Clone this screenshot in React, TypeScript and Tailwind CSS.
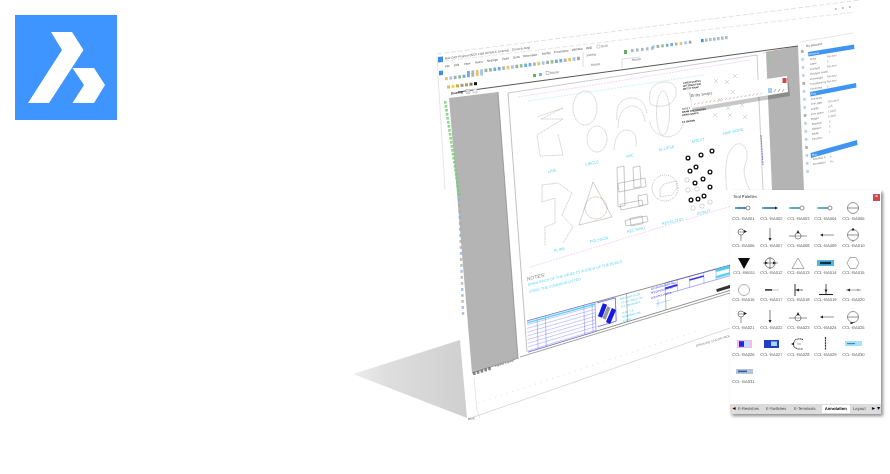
import type { ReactNode } from "react";

const ink = "#4a4a4a";
const soft = "#8a8a8a";

// Small symbol previews of the tool palette, each in a 24x14 box
const Arrow = ({ x, y, dir = "r" }: { x: number; y: number; dir?: "r" | "l" | "d" | "u" }) => {
  const pts = {
    r: `${x},${y - 1.5} ${x + 3},${y} ${x},${y + 1.5}`,
    l: `${x},${y - 1.5} ${x - 3},${y} ${x},${y + 1.5}`,
    d: `${x - 1.5},${y} ${x},${y + 3} ${x + 1.5},${y}`,
    u: `${x - 1.5},${y} ${x},${y - 3} ${x + 1.5},${y}`,
  }[dir];
  return <polygon points={pts} fill="#222" />;
};

const stemCircle = (
  <>
    <circle cx="9" cy="4" r="3" fill="none" stroke={ink} strokeWidth=".6" />
    <line x1="6" y1="4" x2="12" y2="4" stroke={ink} strokeWidth=".5" />
    <line x1="9" y1="7" x2="9" y2="13" stroke={ink} strokeWidth=".6" />
    <Arrow x={12} y={3.5} />
  </>
);
const stem = (
  <>
    <line x1="11" y1="0" x2="11" y2="12" stroke={ink} strokeWidth=".7" />
    <Arrow x={11} y={10} dir="d" />
  </>
);
const inline = (
  <>
    <line x1="3" y1="8" x2="21" y2="8" stroke={ink} strokeWidth=".6" />
    <circle cx="12" cy="8" r="3" fill="white" stroke={ink} strokeWidth=".6" />
    <line x1="9" y1="8" x2="15" y2="8" stroke={ink} strokeWidth=".5" />
    <Arrow x={12} y={5} dir="u" />
  </>
);
const wire = (
  <>
    <line x1="8" y1="7" x2="20" y2="7" stroke={ink} strokeWidth=".6" />
    <Arrow x={9} y={7} dir="l" />
  </>
);
const ringBar = (
  <>
    <circle cx="12" cy="7" r="5.5" fill="none" stroke={ink} strokeWidth=".6" />
    <line x1="6.5" y1="7" x2="17.5" y2="7" stroke={ink} strokeWidth=".6" />
  </>
);
const tagLine = (c1: string, c2: string) => (
  <>
    <line x1="3" y1="7" x2="14" y2="7" stroke={c1} strokeWidth="1.6" />
    <line x1="5" y1="7" x2="14" y2="7" stroke={c2} strokeWidth=".5" />
    <circle cx="16" cy="7" r="2" fill="white" stroke={ink} strokeWidth=".6" />
  </>
);

const symbols: ReactNode[] = [
  tagLine("#3f8fd8", "#1c3f66"),
  <>
    <line x1="3" y1="7" x2="16" y2="7" stroke="#3f8fd8" strokeWidth="1.6" />
    <line x1="5" y1="7" x2="16" y2="7" stroke="#1c3f66" strokeWidth=".5" />
    <Arrow x={16} y={7} />
  </>,
  tagLine("#58b8e8", "#27506f"),
  tagLine("#58b8e8", "#27506f"),
  ringBar,
  stemCircle,
  stem,
  inline,
  wire,
  <>
    {ringBar}
    <Arrow x={12} y={2.5} dir="u" />
    <line x1="12" y1="12.5" x2="12" y2="14" stroke={ink} strokeWidth=".6" />
  </>,
  <polygon points="6,2 18,2 12,13" fill="#0c0c0c" />,
  <>
    <circle cx="11" cy="7" r="5" fill="none" stroke={ink} strokeWidth=".7" />
    <line x1="4" y1="7" x2="19" y2="7" stroke={ink} strokeWidth=".6" />
    <line x1="11" y1="1" x2="11" y2="13" stroke={ink} strokeWidth=".6" />
    <Arrow x={6} y={7} />
    <Arrow x={14} y={7} />
  </>,
  <polygon points="12,2 18,12.5 6,12.5" fill="none" stroke={soft} strokeWidth=".7" />,
  <>
    <rect x="3" y="4" width="17" height="6" fill="#4fb6e6" />
    <rect x="6" y="5.8" width="11" height="2.4" fill="#0b2a3e" />
  </>,
  <polygon points="9,1.5 15,1.5 18,7 15,12.5 9,12.5 6,7" fill="none" stroke={soft} strokeWidth=".7" />,
  <circle cx="12" cy="7" r="5.5" fill="none" stroke={soft} strokeWidth=".7" />,
  <>
    <line x1="6" y1="7" x2="20" y2="7" stroke={soft} strokeWidth=".5" />
    <rect x="6" y="6.2" width="7" height="1.4" fill="#222" />
  </>,
  <>
    <line x1="9" y1="1" x2="9" y2="13" stroke="#333" strokeWidth="1" />
    <line x1="9" y1="7" x2="17" y2="7" stroke="#333" strokeWidth=".7" />
    <Arrow x={13} y={7} dir="l" />
  </>,
  <>
    <line x1="12" y1="1" x2="12" y2="11" stroke="#333" strokeWidth=".8" />
    <line x1="5" y1="11.5" x2="19" y2="11.5" stroke="#222" strokeWidth="1.1" />
    <Arrow x={12} y={6.5} dir="d" />
  </>,
  <>
    <line x1="5" y1="7" x2="20" y2="7" stroke={ink} strokeWidth=".5" />
    <Arrow x={9} y={7} dir="l" />
    <line x1="17" y1="6" x2="17" y2="8" stroke={ink} strokeWidth=".6" />
  </>,
  stemCircle,
  stem,
  inline,
  wire,
  <>
    {ringBar}
    <Arrow x={10.5} y={12.5} dir="d" />
    <line x1="13.5" y1="12.5" x2="10.5" y2="12.5" stroke="#222" strokeWidth=".5" />
  </>,
  <>
    <rect x="5" y="3" width="15" height="8" fill="#f3b8f3" />
    <rect x="7" y="4.2" width="11" height="5.6" fill="#b9e2fb" />
    <rect x="7" y="4.2" width="5" height="5.6" fill="#2323d8" />
  </>,
  <>
    <rect x="5" y="3" width="15" height="8" fill="#1f3fc4" />
    <rect x="12" y="4.5" width="6" height="4.5" fill="#a8d4f6" />
  </>,
  <>
    <path d="M17,2.5 Q10,0.5 8,5 Q6,10 12,12 L17,12" fill="none" stroke="#444" strokeWidth="1.1" strokeDasharray="1.2 .5" />
    <Arrow x={8} y={7} dir="l" />
    <line x1="11" y1="7" x2="15" y2="7" stroke={ink} strokeWidth=".5" />
  </>,
  <line x1="11.5" y1="0" x2="11.5" y2="13" stroke="#333" strokeWidth="1.2" strokeDasharray="2 .6" />,
  <>
    <rect x="4" y="4" width="17" height="5" fill="#a6e2f8" />
    <rect x="6" y="6" width="8" height="1.2" fill="#3d86c9" />
  </>,
  <>
    <rect x="4" y="4" width="17" height="5" fill="#b9c3d4" />
    <rect x="6" y="5.6" width="9" height="1.6" fill="#2d5bb0" />
  </>,
];

const tabs = ["E-Resistors", "E-Switches", "E-Terminals"];

function ToolPalette() {
  return (
    <div className="absolute left-[730px] top-[190px] flex h-[224px] w-[151px] flex-col bg-white text-[#555] shadow-[2px_2px_3px_rgba(0,0,0,0.45)] blur-[0.25px]">
      <div className="flex h-[11px] shrink-0 items-center justify-between pl-[3px] pr-[1px] pt-[3px]">
        {/* browser floors text at 6px, so tiny labels are scaled down */}
        <span className="origin-left scale-[0.7] whitespace-nowrap text-[6px] text-[#333]">Tool Palettes</span>
        <span className="flex h-[7px] w-[7px] items-center justify-center bg-[#d0484c] text-[6px] leading-none text-white">×</span>
      </div>
      <div className="grid flex-1 grid-cols-[repeat(5,27.3px)] content-start">
        {symbols.map((symbol, i) => (
          <div key={i} className="flex h-[27.3px] flex-col items-center">
            <svg viewBox="0 0 24 14" className="h-[14px] w-[24px] shrink-0">
              {symbol}
            </svg>
            <span className="mt-[0.5px] scale-[0.68] whitespace-nowrap text-[6px] leading-[6px]">CCL-GA{String(i + 1).padStart(3, "0")}</span>
          </div>
        ))}
      </div>
      <div className="flex h-[10px] shrink-0 items-center bg-[#dcdcdc] text-[6px] leading-none text-[#444]">
        <span className="w-[8px] text-center text-[6px] text-black">◂</span>
        {tabs.map((tab) => (
          <span key={tab} className="w-[28px] origin-left scale-[0.68] whitespace-nowrap">{tab}</span>
        ))}
        <span className="flex h-[8px] w-[28px] items-center justify-center bg-white font-bold text-black">
          <span className="scale-[0.7] whitespace-nowrap">Annotation</span>
        </span>
        <span className="w-[22px] origin-left translate-x-[3px] scale-[0.7]">Layout</span>
        <span className="w-[5px] text-[6px] text-black">▸</span>
        <span className="w-[4px] text-[6px] text-black">▾</span>
      </div>
    </div>
  );
}

// Text lying on the tilted drawing plane
function T({ x, y, s = -0.13, size = 4, fill = "#555", weight, children }: { x: number; y: number; s?: number; size?: number; fill?: string; weight?: number; children: ReactNode }) {
  return (
    <text transform={`matrix(1 ${s} 0.08 1 ${x} ${y})`} fontSize={size} fill={fill} fontWeight={weight} fontFamily="'Liberation Sans', sans-serif">
      {children}
    </text>
  );
}

const doodle = { fill: "none", stroke: "#8c8c8c", strokeWidth: 0.4, strokeDasharray: "1.2 .5" };

const slanted = ([x0, y0, x1, y1]: number[]) => {
  const d = (x1 - x0) * 0.2;
  return `${x0},${y0 + d} ${x1},${y0} ${x1 + 1},${y1 - d} ${x0 + 1},${y1}`;
};

const rects = [
  [617, 166, 624, 207],
  [633, 166, 640, 188],
  [618, 178, 645, 192],
  [620, 200, 642, 210],
  [638, 194, 647, 206],
  [625, 216, 647, 226],
  [630, 216, 642, 226],
];
const donuts = [[712, 151], [701, 155], [688, 158], [710, 172], [703, 179], [696, 167], [690, 171], [695, 183], [710, 187], [704, 196], [698, 199], [691, 200]];
const rings = [[687, 180], [697, 189], [688, 190], [710, 202], [702, 206], [693, 208]];
const labels: [number, number, string][] = [
  [548, 173, "LINE"], [585, 166, "CIRCLE"], [626, 158, "ARC"], [659, 151, "ELLIPSE"], [692, 143, "MTEXT"], [723, 135, "HMP NODE"],
  [554, 252, "PLINE"], [590, 243, "POLYGON"], [627, 233, "RECTANG"], [662, 225, "REVCLOUD"], [697, 215, "DONUT"],
];
const crosses = [[716, 81], [727, 82], [735, 76], [720, 100], [733, 92], [728, 108], [742, 105], [715, 115], [730, 115], [745, 117]];
const menus: [number, string][] = [[445, "File"], [454, "Edit"], [464, "View"], [475, "Insert"], [487, "Settings"], [502, "Tools"], [513, "Draw"], [523, "Dimension"], [542, "Modify"], [554, "Parametric"], [572, "Window"], [586, "Help"]];
const toolColors = ["#3f8fe0", "#9a9a9a", "#e0b040", "#7fb3e8", "#8a8a8a", "#60b060", "#3f8fe0"];
const propRows: [number, number, string, string][] = [
  [810, 60, "Color", "ByLayer"], [810, 65, "Layer", "0"], [810, 70, "Linetype", "ByLayer"], [810, 75, "Linetype scale", "1"], [810, 80, "Lineweight", "ByLayer"], [810, 85, "Transparency", "ByLayer"], [810, 90, "Thickness", "0"],
  [811, 100, "Contents", ""], [811, 105, "Text style", "Standard"], [811, 110, "Justify", "Left"], [811, 115, "Line space", "1.0000"], [811, 120, "Height", "0.2000"], [812, 125, "Rotation", "0"], [812, 130, "Oblique", "0"], [812, 135, "Width", "1"], [812, 140, "Direction", ""],
  [813, 160, "Insertion X", "0"], [813, 165, "Annotative", "No"],
];

// Title block grid, u runs along the sheet, v runs from its top edge to its bottom edge
const tb = (u: number, v: number) => {
  const x = 527 + u * 203 + v * 1;
  const top = 321 - 0.275 * u * 203;
  const bottom = 352 - 0.305 * u * 203;
  return `${x.toFixed(1)},${(top + (bottom - top) * v).toFixed(1)}`;
};
const tbLine = (u0: number, v0: number, u1: number, v1: number) => `${tb(u0, v0)} ${tb(u1, v1)}`;
const tbBox = (u0: number, v0: number, u1: number, v1: number) => `${tb(u0, v0)} ${tb(u1, v0)} ${tb(u1, v1)} ${tb(u0, v1)}`;

function CadWindow() {
  return (
    <svg viewBox="0 0 890 474" className="absolute inset-0 h-[474px] w-[890px] blur-[0.3px]">
      <defs>
        <linearGradient id="floor" x1="0" y1="0" x2="1" y2="0">
          <stop offset="0" stopColor="#ececec" />
          <stop offset="0.3" stopColor="#dedede" />
          <stop offset="1" stopColor="#cfcfcf" />
        </linearGradient>
      </defs>

      {/* floor shadow */}
      <polygon points="353,374 460,340 467,418" fill="url(#floor)" />
      <polygon points="437,56 860,1 880,300 468,420" fill="white" />

      {/* window outline */}
      <line x1="437" y1="54" x2="860" y2="0" stroke="#ccc" strokeWidth=".6" strokeDasharray="5 2" />
      <line x1="437" y1="62" x2="855" y2="12" stroke="#ccc" strokeWidth=".5" strokeDasharray="5 2" />
      <polyline points="437,56 439,92 445,190" fill="none" stroke="#ccc" strokeWidth=".5" />
      <line x1="468" y1="419" x2="730" y2="328" stroke="#ccc" strokeWidth=".7" />
      <line x1="478" y1="403" x2="700" y2="330" stroke="#bbb" strokeWidth=".5" strokeDasharray="1 5" />
      <polyline points="474,378 477,410 480,418" fill="none" stroke="#d5d5d5" strokeWidth=".6" />
      <T x={468} y={420} size={3} s={-0.1}>Draft</T>

      {/* title bar, menus */}
      <polygon points="438,57 443,56.4 443,62 438,62.6" fill="#3f8fe0" />
      <T x={445} y={59.5} size={3} fill="#555">Bric-CAD Platinum(NOT FOR RESALE License) - [Draw-B.dwg]</T>
      {menus.map(([x, m]) => (
        <T key={m} x={x} y={67.5 - (x - 445) * 0.13} size={3} fill="#444">{m}</T>
      ))}
      <rect x="597" y="45" width="3" height="3" fill="none" stroke="#999" strokeWidth=".4" />
      <T x={601} y={47.5} size={3} fill="#666">Draft</T>

      {/* toolbars */}
      <polygon points="439,71 443,70.4 443,75 439,75.6" fill="#3f8fe0" />
      {Array.from({ length: 26 }, (_, i) => (
        <rect key={i} x={467 + i * 4.4} y={71 - i * 0.57} width="2.8" height="3.4" fill={toolColors[i % 7]} opacity=".75" />
      ))}
      {Array.from({ length: 9 }, (_, i) => (
        <rect key={i} x={445 + i * 4.4} y={77 - i * 0.58} width="2.8" height="3.2" fill={toolColors[(i + 2) % 7]} opacity=".75" />
      ))}
      {Array.from({ length: 7 }, (_, i) => (
        <rect key={i} x={447 + i * 4.5} y={85.5 - i * 0.55} width="3" height="3" fill={["#e8c040", "#f0d060", "#d8a840", "#999", "#d09040", "#777", "#111"][i]} />
      ))}
      <rect x="533" y="74" width="3" height="3" fill="#60b060" />
      <rect x="539" y="73" width="3" height="3" fill="#7fb3e8" />
      <rect x="546" y="71.5" width="3" height="3" fill="none" stroke="#777" strokeWidth=".4" />
      <T x={550} y={74} size={3} fill="#666">Bluster</T>
      {Array.from({ length: 9 }, (_, i) => (
        <rect key={i} x={652 + i * 4.6} y={45.5 - i * 0.6} width="2.6" height="3" fill={toolColors[(i + 3) % 7]} opacity=".75" />
      ))}
      {Array.from({ length: 7 }, (_, i) => (
        <rect key={i} x={701 + i * 4} y={39 - i * 0.5} width="2.6" height="3.2" fill={i === 0 ? "#3f8fe0" : "#a8bcd0"} />
      ))}
      <rect x="624" y="50" width="3" height="4" fill="#60b060" />
      {Array.from({ length: 5 }, (_, i) => (
        <rect key={i} x={631 + i * 5} y={49 - i * 0.6} width="2.6" height="3.2" fill="#a8bcd0" />
      ))}
      <polyline points="583,67 583,52" fill="none" stroke="#aaa" strokeWidth=".4" />
      <polyline points="622,68 622,59 640,57" fill="none" stroke="#aaa" strokeWidth=".4" />
      <T x={586} y={56.5} size={3} fill="#666">ansidrg</T>
      <T x={591} y={66} size={3} fill="#666">Bluster</T>
      <T x={632} y={61} size={3} fill="#666">Bluster</T>

      {/* viewport */}
      <polygon points="449,98 498,92 518,358 472,373" fill="#b4b4b4" />
      <polygon points="766,52 798,46 804,190 772,190" fill="#b4b4b4" />
      <line x1="458" y1="92" x2="798" y2="46" stroke="#444" strokeWidth=".9" />
      <line x1="498" y1="92" x2="518" y2="358" stroke="#777" strokeWidth=".6" />
      <T x={451} y={94.5} size={3} fill="#111" weight={700}>Drawing</T>
      <rect x="466" y="89.5" width="4" height="4" fill="#ddd" stroke="#888" strokeWidth=".3" />
      <rect x="473" y="89" width="4" height="4" fill="#eee" stroke="#888" strokeWidth=".3" />

      {/* left tool strip */}
      {Array.from({ length: 24 }, (_, i) => (
        <rect key={i} x={444 + i * 0.6} y={101 + i * 4} width="2.6" height="2.6" fill="#6fcf6f" opacity=".8" />
      ))}
      {Array.from({ length: 20 }, (_, i) => (
        <rect key={i} x={458 + i * 0.2} y={198 + i * 6} width="2.4" height="2.8" fill={i % 3 === 0 ? "#7fb3e8" : "#aaa"} opacity=".75" />
      ))}

      {/* layout tabs */}
      {Array.from({ length: 5 }, (_, i) => (
        <rect key={i} x={473 + i * 3.8} y={372 - i * 1.2} width="2.6" height="3" fill="#888" />
      ))}
      <T x={495} y={367} size={2.6} fill="#333" s={-0.3}>Layout1</T>
      <T x={505} y={364} size={2.6} fill="#333" s={-0.3}>Layout2</T>
      <line x1="472" y1="373" x2="519" y2="358" stroke="#555" strokeWidth=".5" />

      {/* sheet frame */}
      <polyline points="508,93 757,55 763,190" fill="none" stroke="#999" strokeWidth=".5" />
      <polyline points="508,93 527,352" fill="none" stroke="#999" strokeWidth=".6" />
      <line x1="518" y1="97" x2="750" y2="60" stroke="#f4b8f0" strokeWidth=".6" strokeDasharray="2 1" />
      <line x1="528" y1="101" x2="704" y2="75" stroke="#a8e8fa" strokeWidth=".6" strokeDasharray="2 1" />
      <line x1="530" y1="267" x2="738" y2="204" stroke="#f4b8f0" strokeWidth=".6" strokeDasharray="2 1" />
      <line x1="761" y1="135" x2="763" y2="165" stroke="#6a6ad8" strokeWidth=".9" strokeDasharray="2 .6" />

      {/* drawing exercises */}
      <polyline points="537,117 563,108 541,119 563,119 537,135 540,156 563,155 558,134" {...doodle} />
      <ellipse cx="585" cy="108" rx="12" ry="17" {...doodle} />
      <ellipse cx="597" cy="139" rx="10" ry="13" {...doodle} />
      <path d="M617,120 Q615,98 632,98 Q644,98 647,113" {...doodle} />
      <path d="M618,128 Q618,108 632,106 Q643,106 645,122" {...doodle} />
      <path d="M614,150 Q615,132 626,130 Q638,130 636,147" {...doodle} />
      <ellipse cx="663" cy="113" rx="6.5" ry="22" {...doodle} />
      <path d="M650,95 Q650,84 664,82 Q678,82 676,95 Q672,108 655,106 Q648,105 650,95" {...doodle} />
      <path d="M650,122 Q652,135 668,137 Q680,135 683,124" {...doodle} />
      <polyline points="542,185 558,183 572,193 562,215 573,227 563,243" {...doodle} />
      <polyline points="542,185 542,202 555,198 555,223 545,227 545,245" {...doodle} />
      <polygon points="593,182 612,217 579,225" {...doodle} strokeDasharray="none" />
      <circle cx="596" cy="208" r="11" fill="none" stroke="#c96a6a" strokeWidth=".5" strokeDasharray="1 .5" />
      {rects.map((r, i) => (
        <polygon key={i} points={slanted(r)} fill="none" stroke="#777" strokeWidth=".4" />
      ))}
      <ellipse cx="665" cy="188" rx="13" ry="13" fill="none" stroke="#888" strokeWidth=".7" strokeDasharray=".8 1.2" />
      <polygon points="660,189 664,184 676,181 677,188 672,195 660,197" {...doodle} />
      {donuts.map(([x, y]) => (
        <circle key={`${x}-${y}`} cx={x} cy={y} r="1.9" fill="white" stroke="#111" strokeWidth="1.3" />
      ))}
      {rings.map(([x, y]) => (
        <circle key={`${x}-${y}`} cx={x} cy={y} r="2.2" fill="none" stroke="#999" strokeWidth=".4" />
      ))}
      <path d="M727,190 Q724,170 728,155 Q735,140 743,145 Q750,152 745,165 Q742,175 750,190" {...doodle} />
      {labels.map(([x, y, t]) => (
        <T key={t} x={x} y={y} s={-0.22} size={3.8} fill="#59d3f5">{t}</T>
      ))}

      {/* notes */}
      <T x={527} y={281} s={-0.26} size={5} fill="#888">NOTES:</T>
      <T x={528} y={286} s={-0.25} size={3.5} fill="#59d3f5">DRAW EACH OF THE OBJECTS IN EACH OF THE BOXES</T>
      <T x={529} y={293} s={-0.25} size={3.5} fill="#59d3f5">USING THE COMMAND LISTED</T>
      <T x={696} y={347} s={-0.3} size={3} fill="#888">DRAWING UNCONTROLLED COPY</T>

      {/* title block */}
      <polyline points={tbBox(0, 0, 1, 1)} fill="none" stroke="#444" strokeWidth=".6" />
      <line x1="520" y1="357" x2="730" y2="293" stroke="#444" strokeWidth=".5" />
      <polyline points={tbBox(0, 0, 0.335, 1)} fill="white" stroke="#2d2df0" strokeWidth=".4" />
      {Array.from({ length: 8 }, (_, i) => (
        <polyline key={i} points={tbLine(0, 0.12 * (i + 1), 0.335, 0.12 * (i + 1))} stroke="#4a4af5" strokeWidth=".3" fill="none" />
      ))}
      {[0.05, 0.09, 0.28, 0.32].map((u) => (
        <polyline key={u} points={tbLine(u, 0, u, 1)} stroke="#4a4af5" strokeWidth=".35" fill="none" />
      ))}
      <polyline points={tbLine(0, 0.06, 0.335, 0.06)} stroke="#59d3f5" strokeWidth="1.4" fill="none" />
      <polyline points={tbBox(0.345, 0.04, 0.435, 0.86)} fill="white" stroke="#2222ee" strokeWidth=".6" />
      <line x1="605" y1="304" x2="600" y2="317" stroke="#1717e8" strokeWidth="4.5" />
      <line x1="614" y1="309" x2="608" y2="323" stroke="#1717e8" strokeWidth="4.5" />
      <line x1="609" y1="307" x2="604" y2="319" stroke="#999" strokeWidth="3.5" />
      {[
        [620, 300, "BRIC-CAD CLICK"], [621, 304, "TO THE RIGHT OF"], [621, 308, "THE DRAWINGS"], [622, 314, "PLOT THE"], [622, 318, "COMMAND LINE"], [623, 322, "ICONS"],
      ].map(([x, y, t]) => (
        <T key={String(t)} x={Number(x)} y={Number(y)} s={-0.27} size={2.5} fill="#35c6f0">{t}</T>
      ))}
      <polyline points={tbLine(0.49, 0, 0.49, 1)} stroke="#555" strokeWidth=".4" fill="none" />
      <polyline points={tbLine(0.68, 0, 0.68, 1)} stroke="#555" strokeWidth=".4" fill="none" />
      <T x={651} y={290} s={-0.27} size={2.4} fill="#2222ee">AS DRAWN MATERIAL</T>
      <T x={651} y={294} s={-0.27} size={2.4} fill="#2222ee">SPECIFICATION OF</T>
      <T x={651} y={299} s={-0.27} size={2.4} fill="#2222ee">COUNTED PARTS</T>
      <line x1="656" y1="304" x2="670" y2="300" stroke="#7ab0f0" strokeWidth=".5" />
      <line x1="658" y1="299" x2="658" y2="307" stroke="#7ab0f0" strokeWidth=".5" />
      <polyline points={tbBox(0.68, 0, 1, 0.42)} fill="none" stroke="#2d2df0" strokeWidth=".4" />
      {[0.74, 0.8, 0.87, 0.93].map((u) => (
        <polyline key={u} points={tbLine(u, 0, u, 0.42)} stroke="#4a4af5" strokeWidth=".35" fill="none" />
      ))}
      <polyline points={tbLine(0.93, 0.06, 1, 0.06)} stroke="#59c9e8" strokeWidth="3" fill="none" />
      <polyline points={tbLine(0.93, 0.32, 1, 0.32)} stroke="#59d3f5" strokeWidth="2.5" fill="none" />
      <polyline points={tbLine(0.93, 0.85, 1, 0.85)} stroke="#333" strokeWidth="3" fill="none" />
      <polyline points={tbLine(0.68, 0.2, 0.74, 0.2)} stroke="#3333ee" strokeWidth="2" fill="none" />
      <polyline points={tbLine(0.8, 0.14, 0.87, 0.14)} stroke="#3333ee" strokeWidth="1.4" fill="none" />

      {/* floating snaps toolbar */}
      <polygon points="688,91 787,76 789,94 692,110" fill="#000" opacity=".22" transform="translate(1 2)" />
      <polygon points="690,90 787,76 788,92 692,108" fill="white" />
      <T x={691} y={97} size={3.8} fill="#555">Entity Snaps</T>
      <rect x="782.5" y="78" width="4" height="5" fill="#d0484c" />
      {Array.from({ length: 18 }, (_, i) => (
        <line key={i} x1={694 + i * 3.9} y1={105 - i * 0.62} x2={695.5 + i * 3.9} y2={103 - i * 0.62} stroke={i % 5 === 4 ? "#888" : "#e08080"} strokeWidth=".6" />
      ))}
      <rect x="768" y="88" width="4" height="5" fill="#a8cdf0" />
      {[774, 778, 782].map((x) => (
        <line key={x} x1={x} y1="92" x2={x + 2} y2="89" stroke="#888" strokeWidth=".7" />
      ))}
      <T x={683} y={84} size={2.4} fill="#111" weight={700}>LAYER STATUS</T>
      <T x={683} y={87} size={2.4} fill="#111" weight={700}>SETTINGS FOR</T>
      <T x={683} y={90} size={2.4} fill="#111" weight={700}>ENTITY SNAP</T>
      <T x={682} y={110} size={2.4} fill="#111">NOTE 1</T>
      <T x={682} y={113} size={2.4} fill="#111" weight={700}>DRAW THE ENTITIES</T>
      <T x={682} y={116} size={2.4} fill="#111" weight={700}>USING SNAPS</T>
      <T x={682} y={123} size={2.4} fill="#111" weight={700}>AS SHOWN</T>
      {crosses.map(([x, y]) => (
        <path key={`${x}-${y}`} d={`M${x - 2},${y - 2}L${x + 2},${y + 2}M${x + 2},${y - 2}L${x - 2},${y + 2}`} stroke="#aaa" strokeWidth=".4" />
      ))}
      <line x1="768" y1="52" x2="770" y2="63" stroke="#5fcf8f" strokeWidth=".4" />
      <line x1="763" y1="53" x2="778" y2="50" stroke="#d88" strokeWidth=".4" />

      {/* properties panel */}
      <line x1="800" y1="42" x2="853" y2="33" stroke="#ccc" strokeWidth=".5" />
      <T x={806} y={47} size={3} fill="#555">No selection</T>
      <polygon points="808,52 854,44.5 854.5,49 808.5,56.5" fill="#3f95f0" />
      <polygon points="810,92 856,83 856.5,87.5 810.5,96.5" fill="#3f95f0" />
      <polygon points="810.5,153 857,140 857.5,145 811,158" fill="#3f95f0" />
      <T x={809} y={55} size={2.8} fill="white">General</T>
      <T x={811} y={95} size={2.8} fill="white">Text</T>
      <T x={812} y={156} size={2.8} fill="white">Misc</T>
      {propRows.map(([x, y, name, val]) => (
        <g key={name}>
          <T x={x} y={y} size={2.7} s={-0.15} fill="#666">{name}</T>
          <T x={x + 17} y={y - 2.5} size={2.7} s={-0.15} fill="#888">{val}</T>
        </g>
      ))}
      {Array.from({ length: 16 }, (_, i) => (
        <rect key={i} x={801 + i * 0.35} y={50 + i * 8} width="2.6" height="2.8" fill={i % 4 === 0 ? "#8a8a8a" : "#9cc0e6"} opacity=".7" />
      ))}
      {[[835, 8], [842, 7], [849, 6]].map(([x, y]) => (
        <rect key={x} x={x} y={y} width="1.6" height="2" fill="#bbb" />
      ))}
    </svg>
  );
}

export default function App() {
  return (
    <div className="relative h-[474px] w-[890px] overflow-hidden bg-white p-[15px] font-['Liberation_Sans',sans-serif] [text-rendering:geometricPrecision]">
      <CadWindow />
      <div className="relative flex h-[105px] w-[102px] items-center justify-center bg-[#3f95ff]">
        <svg viewBox="15 15 102 105" className="h-[105px] w-[102px]">
          <polygon points="51,32 72,32 83.5,50 49,103 28,103 62,50" fill="white" />
          <polygon points="72.5,68 94,68 105,85 94,103 72.5,103 84,85" fill="white" />
        </svg>
      </div>
      <ToolPalette />
    </div>
  );
}
